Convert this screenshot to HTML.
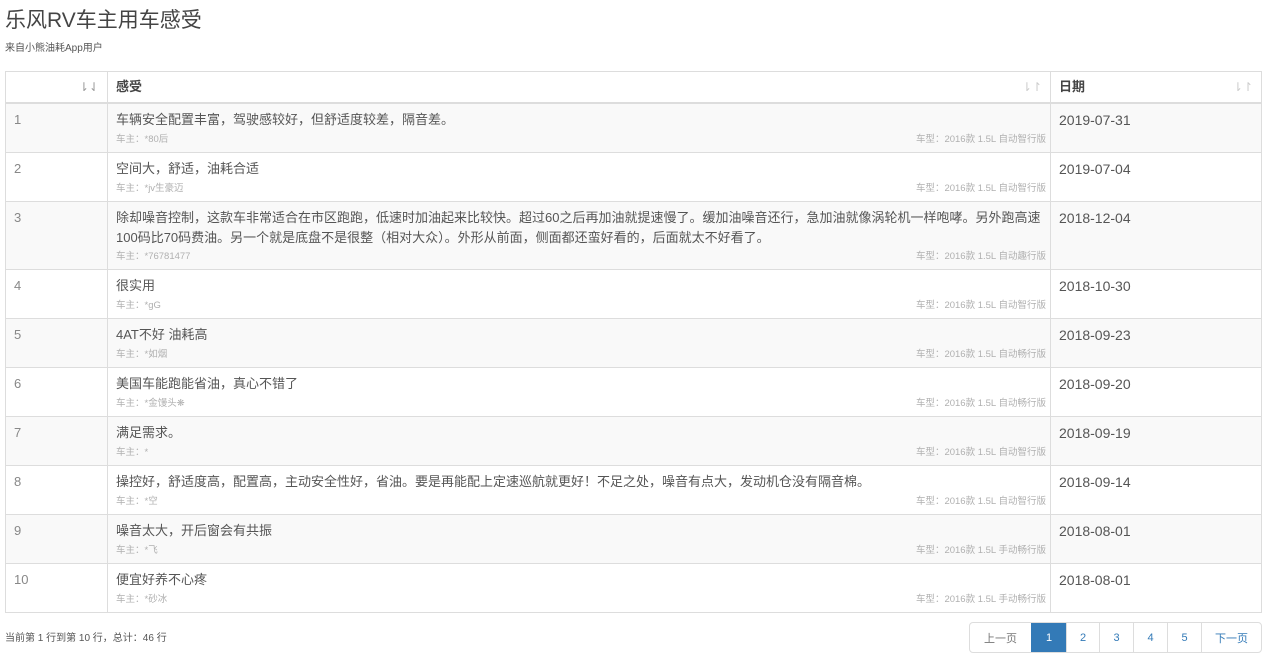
<!DOCTYPE html>
<html><head><meta charset="utf-8"><style>
*{box-sizing:border-box}
body{margin:0;width:1267px;height:661px;overflow:hidden;background:#fff;font-family:"Liberation Sans","Noto Sans CJK SC",sans-serif;color:#555}
h1{position:absolute;left:5px;top:4px;margin:0;font-size:21px;font-weight:normal;color:#444}
.sub{position:absolute;left:5px;top:39px;font-size:10px;color:#555}
table{position:absolute;left:5px;top:71px;width:1257px;border-collapse:collapse;font-size:13px}
th,td{border:1px solid #ddd;vertical-align:top;padding:0 8px}
th{height:31px;text-align:left;font-weight:bold;font-size:13px;border-bottom:2px solid #ddd;position:relative;line-height:30px;color:#444}
tbody tr:nth-child(odd){background:#f9f9f9}
td{height:49px}
td.n{color:#888;padding-top:8px;width:102px}
td.c{width:943px;padding-top:6px;line-height:20px;position:relative;padding-bottom:18px}
td.d{font-size:14px;padding-top:6px;color:#555;line-height:20px}
.o{position:absolute;left:8px;bottom:2px;font-size:9.5px;color:#b0b0b0}
.m{position:absolute;right:4px;bottom:2px;font-size:9.5px;color:#b0b0b0}
.s{position:absolute;right:8px;top:0;color:#ccc;font-weight:normal;font-size:12px}
.foot{position:absolute;left:5px;top:629px;font-size:10px;color:#555}
.pg{position:absolute;left:969px;top:622px;height:31px;display:flex;border:1px solid #ddd;border-radius:4px;overflow:hidden;font-size:11px}
.pg span{display:flex;align-items:center;justify-content:center;border-left:1px solid #ddd;color:#337ab7;height:100%}
.pg span:first-child{border-left:none;color:#777}
.pg .a{background:#337ab7;color:#fff;border-color:#337ab7}
</style></head><body>
<h1>乐风RV车主用车感受</h1>
<div class="sub">来自小熊油耗App用户</div>
<table>
<thead><tr><th style="width:102px"><span class="s" style="color:#999">⇂⇃</span></th><th>感受<span class="s">⇂↾</span></th><th>日期<span class="s">⇂↾</span></th></tr></thead>
<tbody>
<tr><td class="n">1</td><td class="c">车辆安全配置丰富，驾驶感较好，但舒适度较差，隔音差。<span class="o">车主：*80后</span><span class="m">车型：2016款 1.5L 自动智行版</span></td><td class="d">2019-07-31</td></tr>
<tr><td class="n">2</td><td class="c">空间大，舒适，油耗合适<span class="o">车主：*jv生豪迈</span><span class="m">车型：2016款 1.5L 自动智行版</span></td><td class="d">2019-07-04</td></tr>
<tr style="height:68px"><td class="n">3</td><td class="c">除却噪音控制，这款车非常适合在市区跑跑，低速时加油起来比较快。超过60之后再加油就提速慢了。缓加油噪音还行，急加油就像涡轮机一样咆哮。另外跑高速100码比70码费油。另一个就是底盘不是很整（相对大众）。外形从前面，侧面都还蛮好看的，后面就太不好看了。<span class="o">车主：*76781477</span><span class="m">车型：2016款 1.5L 自动趣行版</span></td><td class="d">2018-12-04</td></tr>
<tr><td class="n">4</td><td class="c">很实用<span class="o">车主：*gG</span><span class="m">车型：2016款 1.5L 自动智行版</span></td><td class="d">2018-10-30</td></tr>
<tr><td class="n">5</td><td class="c">4AT不好 油耗高<span class="o">车主：*如烟</span><span class="m">车型：2016款 1.5L 自动畅行版</span></td><td class="d">2018-09-23</td></tr>
<tr><td class="n">6</td><td class="c">美国车能跑能省油，真心不错了<span class="o">车主：*金馒头❋</span><span class="m">车型：2016款 1.5L 自动畅行版</span></td><td class="d">2018-09-20</td></tr>
<tr><td class="n">7</td><td class="c">满足需求。<span class="o">车主：*</span><span class="m">车型：2016款 1.5L 自动智行版</span></td><td class="d">2018-09-19</td></tr>
<tr><td class="n">8</td><td class="c">操控好，舒适度高，配置高，主动安全性好，省油。要是再能配上定速巡航就更好！不足之处，噪音有点大，发动机仓没有隔音棉。<span class="o">车主：*空</span><span class="m">车型：2016款 1.5L 自动智行版</span></td><td class="d">2018-09-14</td></tr>
<tr><td class="n">9</td><td class="c">噪音太大，开后窗会有共振<span class="o">车主：*飞</span><span class="m">车型：2016款 1.5L 手动畅行版</span></td><td class="d">2018-08-01</td></tr>
<tr><td class="n">10</td><td class="c">便宜好养不心疼<span class="o">车主：*砂冰</span><span class="m">车型：2016款 1.5L 手动畅行版</span></td><td class="d">2018-08-01</td></tr>
</tbody></table>
<div class="foot">当前第 1 行到第 10 行，总计：46 行</div>
<div class="pg"><span style="width:61px">上一页</span><span class="a" style="width:35px">1</span><span style="width:33px">2</span><span style="width:34px">3</span><span style="width:34px">4</span><span style="width:34px">5</span><span style="width:60px">下一页</span></div>
</body></html>
